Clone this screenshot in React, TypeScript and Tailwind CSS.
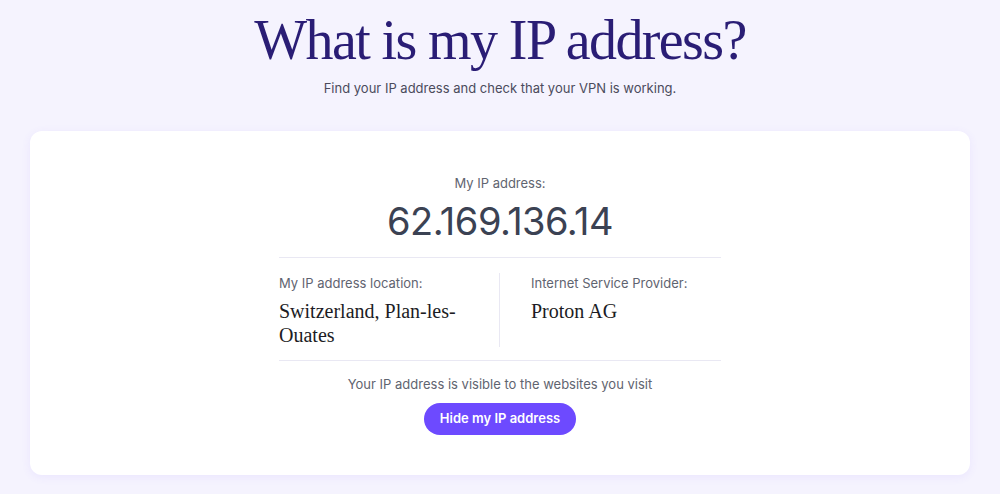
export default function App() {
  return (
    <div className="min-h-[494px] bg-[#f5f3fe] font-['Inter',sans-serif] pt-[7px] pb-[20px]">
      <h1 className="text-center font-['Liberation_Serif',serif] text-[56px] leading-[67px] tracking-[-1.6px] text-[#2a1d75]">
        What is my IP address?
      </h1>
      <p className="mt-[4px] text-center text-[13px] leading-5 text-[#4b4b5c]">
        Find your IP address and check that your VPN is working.
      </p>
      <div className="mx-[30px] mt-[33px] rounded-[12px] bg-white px-6 pt-[42px] pb-[40px] shadow-[0_2px_10px_rgba(109,74,255,0.08)]">
        <div className="mx-auto max-w-[442px]">
          <p className="text-center text-[13px] leading-5 text-[#5f6470]">My IP address:</p>
          <p className="mt-[5px] text-center text-[38px] leading-[46px] tracking-[-0.5px] text-[#3b4253]">
            62.169.136.14
          </p>
          <div className="mt-[13px] border-t border-[#e9e8f3]" />
          <div className="grid grid-cols-2 pt-[15px] pb-[13px]">
            <div className="border-r border-[#e9e8f3] pr-6">
              <p className="text-[13px] leading-5 text-[#5f6470]">My IP address location:</p>
              <p className="mt-[6px] font-['Liberation_Serif',serif] text-[20px] leading-6 text-[#1c1c24]">
                Switzerland, Plan-les-Ouates
              </p>
            </div>
            <div className="pl-[31px]">
              <p className="text-[13px] leading-5 text-[#5f6470]">Internet Service Provider:</p>
              <p className="mt-[6px] font-['Liberation_Serif',serif] text-[20px] leading-6 text-[#1c1c24]">
                Proton AG
              </p>
            </div>
          </div>
          <div className="border-t border-[#e9e8f3]" />
          <p className="mt-[13px] text-center text-[13px] leading-5 text-[#5f6470]">
            Your IP address is visible to the websites you visit
          </p>
          <div className="mt-[9px] flex justify-center">
            <button className="h-[32px] rounded-full bg-[#6d4aff] px-4 text-[13px] font-semibold text-white">
              Hide my IP address
            </button>
          </div>
        </div>
      </div>
    </div>
  );
}
